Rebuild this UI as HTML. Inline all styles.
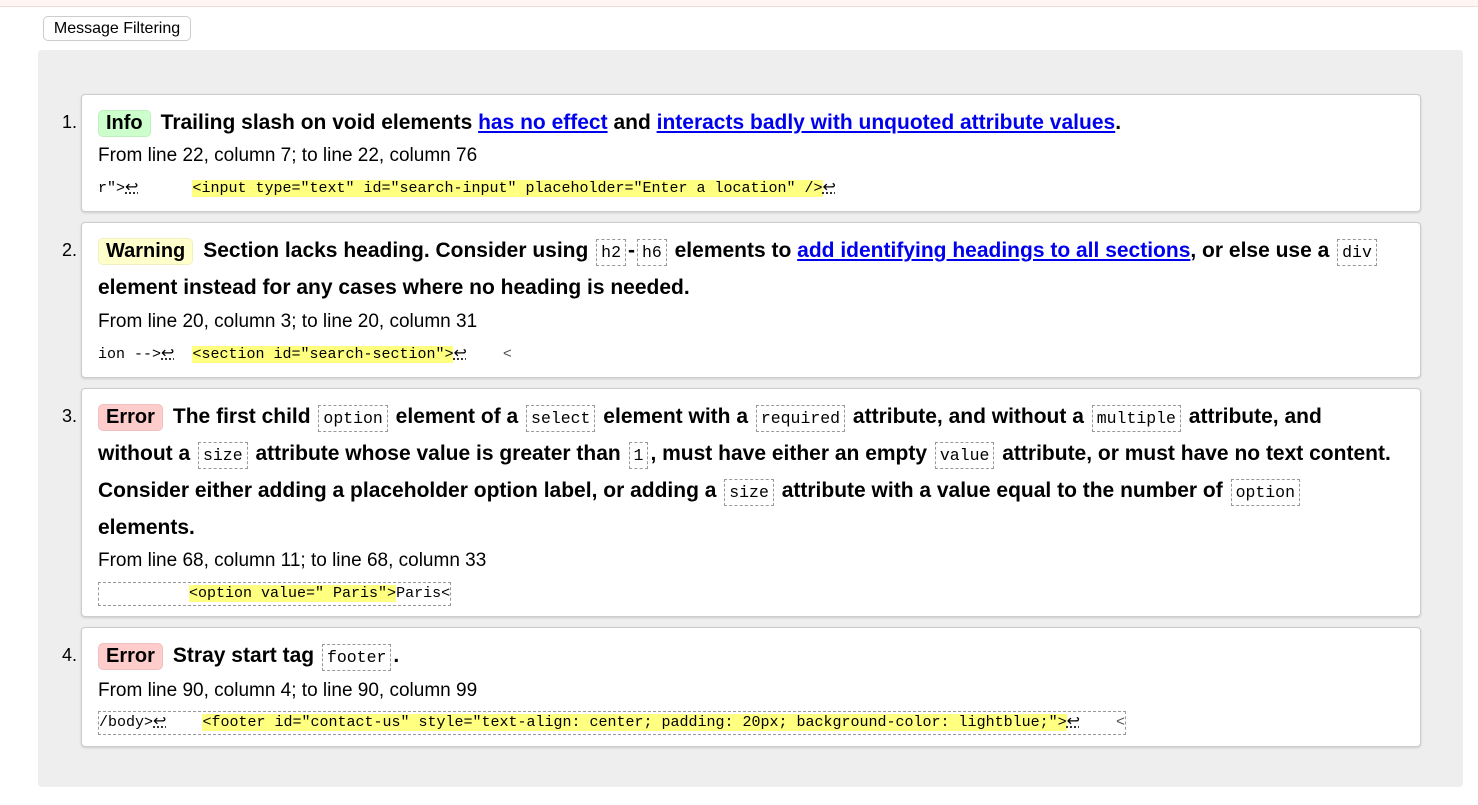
<!DOCTYPE html>
<html><head><meta charset="utf-8">
<style>
*{box-sizing:border-box;margin:0;padding:0}
html,body{width:1478px;height:805px;background:#fff;overflow:hidden;font-family:"Liberation Sans",Arial,sans-serif;color:#000}
.topbar{position:absolute;left:0;top:0;width:1478px;height:7px;background:#fff6f4;border-bottom:1px solid #f3dcd8}
.btn{position:absolute;left:43px;top:16px;width:148px;height:25px;border:1px solid #ccc;border-radius:5px;font-size:16px;line-height:23px;text-align:center;background:#fff}
.wrap{position:absolute;left:38px;top:50px;width:1425px;height:737px;background:#eee;border-radius:4px}
.card{position:absolute;left:43px;width:1340px;background:#fff;border:1px solid #ccc;border-radius:4px;box-shadow:0 1px 2px #ccc;padding:9px 0 0 16px}
.num{position:absolute;left:-20px;top:9px;font-size:18px;line-height:37px}
.msg{font-weight:bold;font-size:21px;line-height:37px;white-space:nowrap}
.badge{display:inline-block;padding:0 7px;border-radius:5px;line-height:25px;margin-right:10px;border:1px solid rgba(0,0,0,0.06);font-size:20px}
.info{background:#ccffcc}.warn{background:#ffffcc}.err{background:#ffcccc}
a{color:#0000ee;text-decoration:underline}
code{font-family:"Liberation Mono",monospace;font-weight:normal;font-size:16.5px;line-height:10px;border:1px dashed #999;padding:3px 4px;margin:0 2px}
.loc{font-size:19px;line-height:28px;padding-top:1px}
.ext{font-family:"Liberation Mono",monospace;font-size:15px;line-height:22px;margin-top:8px;white-space:pre;display:inline-block}
.ext.b{border:1px dashed #999}
.hl{background:#ffff80}
.lf{text-decoration:underline dotted;color:#000;font-family:"DejaVu Sans",sans-serif;font-size:16px;line-height:10px}
.g{color:#555}
</style></head><body>
<div class="topbar"></div>
<div class="btn">Message Filtering</div>
<div class="wrap">
 <div class="card" style="top:44px;height:118px">
  <div class="num">1.</div>
  <div class="msg"><span class="badge info">Info</span>Trailing slash on void elements <a>has no effect</a> and <a>interacts badly with unquoted attribute values</a>.</div>
  <div class="loc">From line 22, column 7; to line 22, column 76</div>
  <div class="ext">r"&gt;<span class="lf">↩</span>      <span class="hl">&lt;input type="text" id="search-input" placeholder="Enter a location" /&gt;</span><span class="lf">↩</span></div>
 </div>
 <div class="card" style="top:172px;height:156px">
  <div class="num">2.</div>
  <div class="msg"><span class="badge warn">Warning</span>Section lacks heading. Consider using <code>h2</code>-<code>h6</code> elements to <a>add identifying headings to all sections</a>, or else use a <code>div</code><br>element instead for any cases where no heading is needed.</div>
  <div class="loc" style="padding-top:2px">From line 20, column 3; to line 20, column 31</div>
  <div class="ext">ion --&gt;<span class="lf">↩</span>  <span class="hl">&lt;section id="search-section"&gt;</span><span class="lf">↩</span>    <span class="g">&lt;</span></div>
 </div>
 <div class="card" style="top:338px;height:229px">
  <div class="num">3.</div>
  <div class="msg"><span class="badge err">Error</span>The first child <code>option</code> element of a <code>select</code> element with a <code>required</code> attribute, and without a <code>multiple</code> attribute, and<br>without a <code>size</code> attribute whose value is greater than <code>1</code>, must have either an empty <code>value</code> attribute, or must have no text content.<br>Consider either adding a placeholder option label, or adding a <code>size</code> attribute with a value equal to the number of <code>option</code><br>elements.</div>
  <div class="loc">From line 68, column 11; to line 68, column 33</div>
  <div class="ext b" style="margin-top:7px">          <span class="hl">&lt;option value=" Paris"&gt;</span>Paris&lt;</div>
 </div>
 <div class="card" style="top:577px;height:120px">
  <div class="num">4.</div>
  <div class="msg"><span class="badge err">Error</span>Stray start tag <code>footer</code>.</div>
  <div class="loc" style="padding-top:3px">From line 90, column 4; to line 90, column 99</div>
  <div class="ext b" style="margin-top:6px">/body&gt;<span class="lf">↩</span>    <span class="hl">&lt;footer id="contact-us" style="text-align: center; padding: 20px; background-color: lightblue;"&gt;</span><span class="lf">↩</span>    <span class="g">&lt;</span></div>
 </div>
</div>
</body></html>
